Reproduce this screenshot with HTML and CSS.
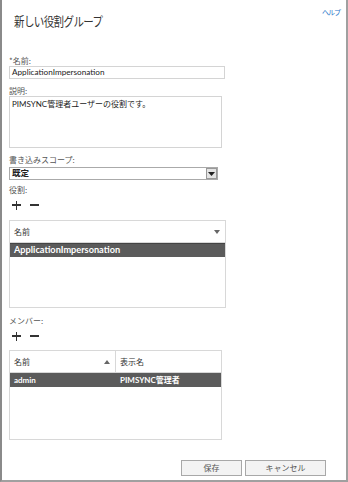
FILE: index.html
```html
<!DOCTYPE html>
<html lang="ja">
<head>
<meta charset="utf-8">
<link rel="stylesheet" href="styles.css">
</head>
<body>
<div class="win">
  <div class="top">
    <h1 class="title">新しい役割グループ</h1>
    <a class="help">ヘルプ</a>
  </div>
  <div class="form">
    <label class="lbl">*名前:</label>
    <div class="input">ApplicationImpersonation</div>
    <label class="lbl">説明:</label>
    <div class="textarea">PIMSYNC管理者ユーザーの役割です。</div>
    <label class="lbl">書き込みスコープ:</label>
    <div class="select"><span>既定</span><span class="ddbtn"><svg width="7" height="4" viewBox="0 0 7 4"><path d="M0 0h7L3.5 4z" fill="#222"/></svg></span></div>
    <label class="lbl after-select">役割:</label>
    <div class="pm pm-roles"><span class="plus"></span><span class="minus"></span></div>
    <div class="list roles">
      <div class="hdr one"><span>名前</span><svg width="6" height="4" viewBox="0 0 6 4"><path d="M0 0h6L3 4z" fill="#666"/></svg></div>
      <div class="row sel">ApplicationImpersonation</div>
    </div>
    <label class="lbl after-roles">メンバー:</label>
    <div class="pm pm-members"><span class="plus"></span><span class="minus"></span></div>
    <div class="list members">
      <div class="hdr two">
        <div class="col c1"><span>名前</span><svg width="6" height="4" viewBox="0 0 6 4"><path d="M0 4h6L3 0z" fill="#666"/></svg></div>
        <div class="col c2">表示名</div>
      </div>
      <div class="row sel two-row"><span class="c1t">admin</span><span>PIMSYNC管理者</span></div>
    </div>
  </div>
  <div class="buttons">
    <button class="btn save">保存</button>
    <button class="btn cancel">キャンセル</button>
  </div>
</div>
</body>
</html>
```
FILE: styles.css
```css
* { box-sizing: border-box; }
html, body { margin: 0; padding: 0; background: #fff; }
body { font-family: Lato, "Noto Sans CJK JP", sans-serif; color: #333; }
.win {
  width: 348px; height: 482px;
  border-left: 2px solid #8a8a8a;
  border-right: 2px solid #a0a0a0;
  border-bottom: 2px solid #a0a0a0;
  display: flex; flex-direction: column;
}
.top { display: flex; justify-content: space-between; align-items: flex-start; height: 53px; }
.title { margin: 12px 0 0 12px; font-family: "Noto Sans CJK JP", sans-serif; font-size: 10.5px; font-weight: normal; color: #333; line-height: 18px; letter-spacing: -0.6px; transform: scaleY(1.2); transform-origin: left center; }
.help { margin: 6px 6px 0 0; font-family: "Noto Sans CJK JP", sans-serif; font-size: 7px; color: #1e73c8; line-height: 12px; letter-spacing: -1px; }
.form { padding-left: 7px; display: flex; flex-direction: column; align-items: flex-start; }
.lbl { font-size: 8px; color: #555; line-height: 11px; height: 13px; padding-top: 2px; font-family: "Noto Sans CJK JP", sans-serif; }
.input {
  width: 216px; height: 13px; border: 1px solid #d4d4d4; font-size: 8.2px; line-height: 11px; padding-left: 2px; color: #222;
}
.input + .lbl { margin-top: 4px; }
.textarea {
  width: 213px; height: 52px; border: 1px solid #d4d4d4; font-size: 8px; line-height: 12px; padding: 1px 2px; color: #222;
}
.textarea + .lbl { margin-top: 4px; }
.select {
  margin-top: 2px;
  width: 209px; height: 13px; border: 1px solid #aaa; font-size: 8.5px; line-height: 11px; padding-left: 2px; color: #222;
  display: flex; justify-content: space-between; align-items: center; font-weight: bold;
}
.ddbtn { width: 11px; height: 11px; background: #e4e4e4; border: 1px solid #999; display: flex; align-items: center; justify-content: center; }
.lbl.after-select { margin-top: 2px; }
.pm { display: flex; gap: 9px; height: 20px; align-items: center; padding-left: 3px; }
.pm-roles { margin-bottom: 5px; }
.pm-members { margin-bottom: 4px; }
.plus, .minus { position: relative; width: 9px; height: 9px; display: block; }
.plus::before, .minus::before { content: ""; position: absolute; left: 0; top: 3.75px; width: 9px; height: 1.5px; background: #333; }
.plus::after { content: ""; position: absolute; left: 3.75px; top: 0; width: 1.5px; height: 9px; background: #333; }
.list { border: 1px solid #d8d8d8; }
.roles { width: 217px; height: 88px; }
.members { width: 213px; height: 90px; }
.hdr { height: 22px; border-bottom: 1px solid #d8d8d8; font-size: 8px; color: #333; display: flex; align-items: center; font-family: "Noto Sans CJK JP", sans-serif; }
.hdr.one { justify-content: space-between; padding: 0 5px 0 4px; }
.hdr.two { align-items: stretch; }
.col { display: flex; align-items: center; }
.col.c1 { width: 106px; border-right: 1px solid #d8d8d8; justify-content: space-between; padding: 0 5px 0 4px; }
.col.c2 { padding-left: 4px; }
.row.sel { height: 14px; background: #5b5b5b; color: #fff; font-weight: bold; font-size: 8px; line-height: 14px; padding-left: 4px; }
.roles .row.sel { border-top: 1px solid #444; line-height: 12px; font-size: 9.2px; }
.two-row { display: flex; }
.c1t { width: 106px; }
.lbl.after-roles { margin-top: 5px; }
.buttons { margin-top: auto; display: flex; justify-content: flex-end; gap: 3px; padding: 0 20px 4px 0; }
.btn {
  height: 16px; border: 1px solid #a8a8a8; background: #f3f3f3; font-family: "Noto Sans CJK JP", sans-serif; font-size: 8px; color: #555; padding: 0; line-height: 14px;
}
.save { width: 61px; }
.cancel { width: 81px; }
```
